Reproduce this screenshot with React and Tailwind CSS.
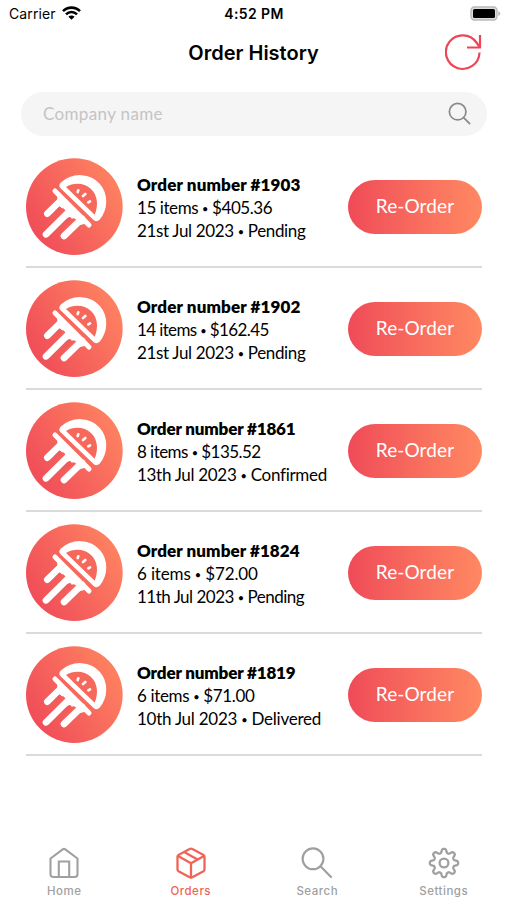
import { IoSearchOutline } from "react-icons/io5";

const orders = [
  { id: 1903, items: 15, total: "405.36", date: "21st Jul 2023", status: "Pending", tracking: ["tracking-[0.13px]", "tracking-[-0.42px]", "tracking-[-0.35px]"] },
  { id: 1902, items: 14, total: "162.45", date: "21st Jul 2023", status: "Pending", tracking: ["tracking-[0.13px]", "tracking-[-0.62px]", "tracking-[-0.35px]"] },
  { id: 1861, items: 8, total: "135.52", date: "13th Jul 2023", status: "Confirmed", tracking: ["tracking-[-0.15px]", "tracking-[-0.55px]", "tracking-[-0.3px]"] },
  { id: 1824, items: 6, total: "72.00", date: "11th Jul 2023", status: "Pending", tracking: ["tracking-[0.08px]", "tracking-[-0.15px]", "tracking-[-0.5px]"] },
  { id: 1819, items: 6, total: "71.00", date: "10th Jul 2023", status: "Delivered", tracking: ["tracking-[-0.15px]", "tracking-[-0.35px]", "tracking-[-0.25px]"] },
];

function StatusBar() {
  return (
    <div className="grid grid-cols-3 items-center h-[27px] pl-[9px] pr-[6px] text-sm">
      <div className="flex items-center gap-[6px]">
        <span className="tracking-[0.1px]">Carrier</span>
        <svg className="-mt-[2px]" width="19" height="14" viewBox="0 0 19 14" fill="none" stroke="#000" strokeWidth="2.6">
          <path d="M1 5.2a12 12 0 0 1 17 0" />
          <path d="M4 8.3a7.8 7.8 0 0 1 11 0" />
          <path d="M9.5 13.8 6.4 10.7a4.4 4.4 0 0 1 6.2 0z" fill="#000" stroke="none" />
        </svg>
      </div>
      <span className="pr-[2px] text-center font-semibold tracking-[0.4px] whitespace-nowrap">4:52 PM</span>
      <svg className="justify-self-end" width="31" height="15" viewBox="0 0 31 15">
        <rect x="1" y="1" width="26" height="13" rx="3.5" fill="#ddd" stroke="#b9b9b9" strokeWidth="1.4" />
        <rect x="3" y="3" width="22" height="9" rx="1.5" fill="#000" />
        <path d="M28.3 5v5q2-1 2-2.500t-2-2.500z" fill="#b9b9b9" />
      </svg>
    </div>
  );
}

function Logo() {
  return (
    <svg className="shrink-0" width="97" height="97" viewBox="3 1 291 291">
      <defs>
        <linearGradient id="logo" x1="0" y1="0.8" x2="1" y2="0.2">
          <stop offset="0" stopColor="#ef4958" />
          <stop offset="1" stopColor="#ff8561" />
        </linearGradient>
      </defs>
      <circle cx="148" cy="147" r="145" fill="url(#logo)" />
      {/* melon slice */}
      <path
        d="M109 78C144 46 196 50 222 81C247 110 246 154 221 184Q215 190 209 185L109 89Q104 84 109 78Z"
        fill="#fff"
        stroke="#fff"
        strokeWidth="7"
        strokeLinejoin="round"
      />
      <path d="M123 88C146 73 179 75 198 94C218 113 221 143 209 171Z" fill="#f7685c" />
      <path d="M158 103 160 98M174 115 181 109M190 134 195 131" stroke="#fff" strokeWidth="8" strokeLinecap="round" />
      {/* rind and tentacles */}
      <g stroke="#fff" strokeLinecap="round" fill="none">
        <path d="M90 100 192 202" strokeWidth="15" />
        <path d="M108 128 67 168M138 156 63 230M171 183 117 235" strokeWidth="20" />
      </g>
      <path d="M96 108 188 197 162 203Q153 175 139 184L124 180Q126 151 109 151L98 138Z" fill="#fff" />
      <path d="M104 154 93 166M134 184 112 207" stroke="#f15c5b" strokeWidth="12" strokeLinecap="round" />
    </svg>
  );
}

function Dot() {
  return <span className="relative -top-px text-[11px] leading-none">•</span>;
}

function OrderRow({ order }) {
  return (
    <li className="flex items-center h-[122px] pt-px border-b-2 border-[#dadada]">
      <Logo />
      <div className="pt-px ml-[14px] flex-grow font-['Lato',sans-serif] text-[17px] leading-[23px] whitespace-nowrap">
        <p className={`font-extrabold ${order.tracking[0]}`}>Order number #{order.id}</p>
        <p className={order.tracking[1]}>{order.items} items <Dot /> ${order.total}</p>
        <p className={order.tracking[2]}>{order.date} <Dot /> {order.status}</p>
      </div>
      <button className="w-[134px] h-[54px] rounded-full bg-linear-to-r from-[#ef4a58] to-[#ff8862] text-white font-['Lato',sans-serif] text-[19px] tracking-[0.1px]">
        Re-Order
      </button>
    </li>
  );
}

function HomeIcon() {
  return (
    <svg width="32" height="32" viewBox="0 0 32 32" fill="none" stroke="currentColor" strokeWidth="2.100" strokeLinejoin="round">
      <path d="M2.500 11.500 14.700 2.300Q16 1.400 17.300 2.300L29.500 11.500V27Q29.500 30 26.500 30H5.500Q2.500 30 2.500 27Z" />
      <path d="M10.800 30V14.500H21.200V30" strokeLinejoin="miter" />
    </svg>
  );
}

function BoxIcon() {
  return (
    <svg width="32" height="32" viewBox="0 0 32 32" fill="none" stroke="currentColor" strokeWidth="2.300" strokeLinejoin="round" strokeLinecap="round">
      <path d="M14.600 2 3.500 7.900Q2.500 8.500 2.500 9.700V22.500Q2.500 23.700 3.500 24.300L14.700 30.300Q16 31 17.300 30.300L28.500 24.300Q29.500 23.700 29.500 22.500V9.700Q29.500 8.500 28.500 7.900L17.400 2Q16 1.200 14.600 2Z" />
      <path d="M3 9 16 16.200 29 9M16 16.200V30.500M9.500 5.200 22.600 12.400" />
    </svg>
  );
}

function SearchIcon() {
  return (
    <svg width="32" height="32" viewBox="0 0 32 32" fill="none" stroke="currentColor" strokeWidth="2.200" strokeLinecap="round">
      <circle cx="12" cy="11.800" r="10.400" />
      <path d="M19.500 19.300 30 30" />
    </svg>
  );
}

// eight rounded teeth traced around the centre
const gearPoints = Array.from({ length: 192 }, (_, i) => {
  const a = (i / 192) * Math.PI * 2;
  const r = 12.2 + 2.1 * Math.tanh(1.6 * Math.cos(8 * a));
  return `${(16 + r * Math.cos(a)).toFixed(2)},${(16 + r * Math.sin(a)).toFixed(2)}`;
}).join(" ");

function GearIcon() {
  return (
    <svg width="32" height="32" viewBox="0 0 32 32" fill="none" stroke="currentColor" strokeWidth="2.300" strokeLinejoin="round">
      <circle cx="16" cy="16" r="4.400" />
      <polygon points={gearPoints} />
    </svg>
  );
}

const tabs = [
  { label: "Home", Icon: HomeIcon },
  { label: "Orders", Icon: BoxIcon, active: true },
  { label: "Search", Icon: SearchIcon },
  { label: "Settings", Icon: GearIcon },
];

export default function App() {
  return (
    <main className="flex flex-col w-[507px] h-[900px] bg-white text-black font-['Inter',sans-serif] overflow-hidden">
      <StatusBar />
      <header className="grid grid-cols-3 items-center h-[50px] px-[25px]">
        <span />
        <h1 className="pt-px text-center text-[20px] font-semibold whitespace-nowrap">Order History</h1>
        <svg className="justify-self-end" width="37" height="37" viewBox="0 0 37 37" fill="none" stroke="#ed4657" strokeWidth="2.2">
          <path d="M34.500 18.500A16.800 16.800 0 1 1 31.500 8.500L34.500 13M35 1V13.500H22" />
        </svg>
      </header>
      <div className="flex items-center justify-between mt-[15px] ml-[21px] mr-[20px] h-[44px] rounded-full bg-[#f5f5f5] pl-[22px] pr-[14px]">
        <span className="font-['Lato',sans-serif] text-[17px] tracking-[0.35px] text-[#c4c4c4]">Company name</span>
        <IoSearchOutline className="-mt-[2px] size-[27px] text-[#888]" />
      </div>
      <ul className="mt-[10px] ml-[26px] mr-[25px]">
        {orders.map((order) => (
          <OrderRow key={order.id} order={order} />
        ))}
      </ul>
      <nav className="flex mt-auto h-[53px] pl-px">
        {tabs.map(({ label, Icon, active }) => (
          <a
            key={label}
            className={`flex flex-col items-center flex-1 text-[11.5px] font-medium tracking-[0.5px] ${active ? "text-[#ee6558]" : "text-[#a0a0a0]"}`}
          >
            <Icon />
            <span className="mt-[7px] leading-none">{label}</span>
          </a>
        ))}
      </nav>
    </main>
  );
}
